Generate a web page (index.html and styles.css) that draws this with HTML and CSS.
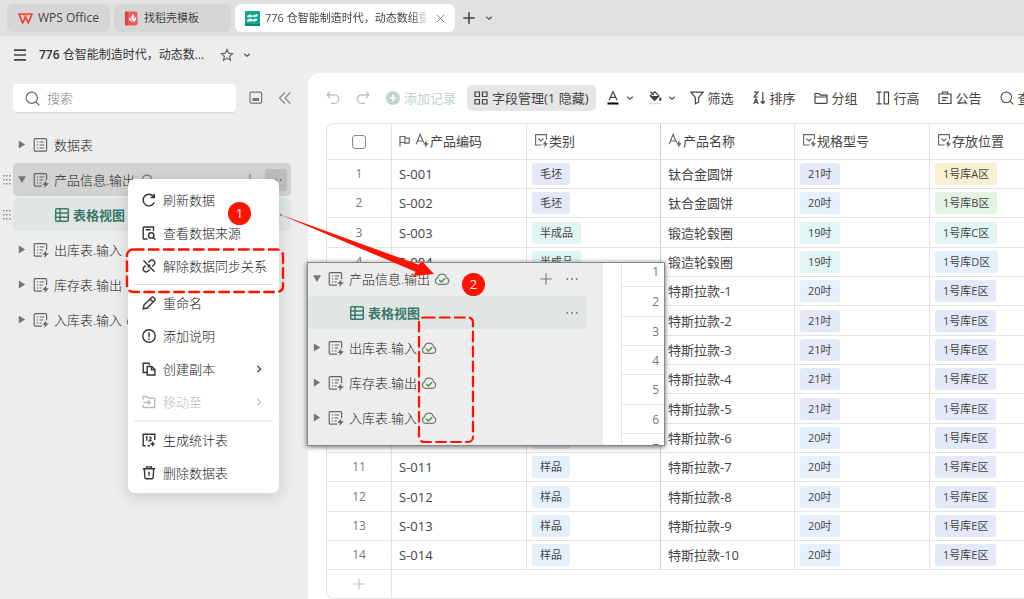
FILE: index.html
```html
<!DOCTYPE html>
<html lang="zh-CN">
<head>
<meta charset="utf-8">
<meta name="viewport" content="width=device-width, initial-scale=1">
<title>776 仓智能制造时代</title>
<link rel="stylesheet" href="styles.css">
</head>
<body>
<svg class="sprite" aria-hidden="true">
  <symbol id="sheet" viewBox="0 0 16 16"><rect x="1.2" y="1.7" width="12.4" height="12.4" rx="1"/><path d="M3.8 5h1.4M3.8 8h1.4M3.8 11h1.4M6.6 5h4.6M6.6 8h4.6M6.6 11h4.6"/></symbol>
  <symbol id="sheet-sync" viewBox="0 0 16 16"><path d="M9 14.1H2.2a1 1 0 0 1-1-1V2.700a1 1 0 0 1 1-1h10.400a1 1 0 0 1 1 1V8M3.800 5h1.400M3.800 8h1.400M3.800 11h1.400M6.600 5h4.600M6.600 8h3.600M6.600 11h2"/><path class="solid" d="M13.400 8.200 9.400 13h2.500l-.6 3 4.500-4.800h-2.700z"/></symbol>
  <symbol id="grid-view" viewBox="0 0 16 16"><rect x="1.7" y="1.7" width="12.6" height="12.6" rx="1"/><path d="M6 1.7v12.6M1.7 6h12.6M1.7 10.2h12.6"/></symbol>
  <symbol id="dots" viewBox="0 0 16 16"><circle class="solid" cx="2.6" cy="8" r="1.1"/><circle class="solid" cx="8" cy="8" r="1.1"/><circle class="solid" cx="13.4" cy="8" r="1.1"/></symbol>
  <symbol id="plus" viewBox="0 0 16 16"><path d="M8 1.5v13M1.5 8h13"/></symbol>
  <symbol id="chev-down" viewBox="0 0 8 8"><path d="m1.2 2.7 2.8 2.6 2.8-2.6"/></symbol>
  <symbol id="chev-right" viewBox="0 0 8 8"><path d="M2.4.8 5.6 4 2.4 7.2"/></symbol>
  <symbol id="grip" viewBox="0 0 8 12"><path class="solid" d="M0 1h1.5v1.5H0zM3 1h1.5v1.5H3zM6 1h1.5v1.5H6zM0 5h1.5v1.5H0zM3 5h1.5v1.5H3zM6 5h1.5v1.5H6zM0 9h1.5v1.5H0zM3 9h1.5v1.5H3zM6 9h1.5v1.5H6z"/></symbol>
  <symbol id="cloud" viewBox="0 0 16 16"><path d="M4.6 13.300a3.300 3.300 0 0 1-1-6.400 4.500 4.500 0 0 1 8.900 0 3.300 3.300 0 0 1-1 6.400z"/><path class="tick" d="m5.2 8.900 2.200 2.100 3.600-3.600"/></symbol>
  <symbol id="search" viewBox="0 0 16 16"><circle cx="7.200" cy="7.200" r="6"/><path d="m11.600 11.600 3.600 3.600"/></symbol>
  <symbol id="text-sync" viewBox="0 0 16 16"><path d="M1.200 12 5.500 1.500 9.300 10.500M2.600 8.500h5.600"/><path class="solid" d="M12.200 7.600 8.800 12.200h2.300l-.5 3.600 4-5h-2.300z"/></symbol>
  <symbol id="select-sync" viewBox="0 0 16 16"><path d="M8 12.800H1.700V1.700h11.600V7M4.700 5.900l2.700 2.500 2.700-2.500"/><path class="solid" d="M12.600 7.800 9.200 12.300h2.300l-.5 3.500 4-4.900h-2.300z"/></symbol>
</svg>

<header class="tabs">
  <a class="tab tab-home" href="#"><svg class="logo" viewBox="0 0 16 14"><path d="M1 2.200h14l-4 9.600-3-6.200-3 6.200z" fill="none" stroke="#f0372d" stroke-width="1.7" stroke-linejoin="round"/><path d="M5.800 2.200 8 6.200l2.400-4" fill="none" stroke="#ff6b3d" stroke-width="1.4"/></svg>WPS Office</a>
  <a class="tab tab-docer" href="#"><svg class="logo" viewBox="0 0 14 16"><rect width="13.500" height="15" y=".5" rx="2.500" fill="#f05a5a"/><rect width="3" height="15" y=".5" rx="1" fill="#d84444"/><path d="M8.600 3c2 2.200 2 4.600-.6 7.200C6 7.800 6.400 5.200 8.600 3z" fill="#fff"/><path d="M4 6.800c1.600.6 2.800 1.800 3.600 4.200-2.200-.2-3.500-1.800-3.600-4.200zM12.200 6.200c.2 3-1 5-4 6 .2-2.800 1.500-4.800 4-6z" fill="#fff"/></svg>找稻壳模板</a>
  <a class="tab tab-current" href="#"><svg class="logo" viewBox="0 0 15 15"><rect width="15" height="15" rx="1" fill="#0ea592"/><path d="M0 13h15v1a1 1 0 0 1-1 1H1a1 1 0 0 1-1-1z" fill="#0a8576"/><path d="m3.300 5.300 1.900-.7M9.300 5l2.200-.7M3.200 9.600l2.200-.8M9 9.400l2-.7M5.200 4.600l1.300.6M5.400 8.800l1.200.5" stroke="#fff" stroke-width="2.300" stroke-linecap="round"/></svg><span class="tab-title">776 仓智能制造时代，动态数组重</span><svg class="icon close" viewBox="0 0 10 10"><path d="m1 1 8 8M9 1 1 9"/></svg></a>
  <button class="bare new-tab" aria-label="新建"><svg class="icon"><use href="#plus"/></svg></button>
  <button class="bare" aria-label="更多标签"><svg class="icon chev"><use href="#chev-down"/></svg></button>
</header>

<div class="titlebar">
  <button class="bare burger" aria-label="菜单"><svg class="icon" viewBox="0 0 12 12"><path d="M0 1.200h12M0 6h12M0 10.800h12"/></svg></button>
  <h1 class="title"><b>776</b> 仓智能制造时代，动态数...</h1>
  <button class="bare star" aria-label="收藏"><svg class="icon" viewBox="0 0 14 14"><path d="m7 1.500 1.600 3.700 4 .4-3 2.700.9 3.900L7 10.100l-3.500 2.100.9-3.900-3-2.700 4-.4z"/></svg></button>
  <button class="bare" aria-label="展开"><svg class="icon chev"><use href="#chev-down"/></svg></button>
</div>

<div class="workspace">
  <aside class="sidebar">
    <div class="search-row">
      <label class="search"><svg class="icon"><use href="#search"/></svg><input type="search" placeholder="搜索" aria-label="搜索"></label>
      <button class="bare dock" aria-label="停靠"><svg class="icon" viewBox="0 0 14 14"><rect x="1" y="1.200" width="11.600" height="11" rx="1.200"/><path class="solid" d="M3.500 7h6.600v3H3.500z"/></svg></button>
      <button class="bare fold" aria-label="收起"><svg class="icon" viewBox="0 0 14 14"><path d="M6.800 1.500 1.500 7l5.300 5.500M12.300 1.500 7 7l5.300 5.500"/></svg></button>
    </div>
    <ul class="tree">
      <li class="node"><span class="grip"></span><a class="row" href="#"><i class="arrow"></i><svg class="icon"><use href="#sheet"/></svg>数据表</a></li>
      <li class="node"><span class="grip"><svg><use href="#grip"/></svg></span><a class="row row-active" href="#"><i class="arrow open"></i><svg class="icon"><use href="#sheet-sync"/></svg>产品信息.输出<svg class="icon cloud"><use href="#cloud"/></svg><span class="actions"><svg class="icon"><use href="#plus"/></svg><span class="more"><svg class="icon"><use href="#dots"/></svg></span></span></a></li>
      <li class="node"><span class="grip"><svg><use href="#grip"/></svg></span><a class="row row-view" href="#"><svg class="icon"><use href="#grid-view"/></svg>表格视图<span class="actions"><svg class="icon"><use href="#dots"/></svg></span></a></li>
      <li class="node"><span class="grip"></span><a class="row" href="#"><i class="arrow"></i><svg class="icon"><use href="#sheet-sync"/></svg>出库表.输入</a></li>
      <li class="node"><span class="grip"></span><a class="row" href="#"><i class="arrow"></i><svg class="icon"><use href="#sheet-sync"/></svg>库存表.输出</a></li>
      <li class="node"><span class="grip"></span><a class="row" href="#"><i class="arrow"></i><svg class="icon"><use href="#sheet-sync"/></svg>入库表.输入<svg class="icon cloud"><use href="#cloud"/></svg></a></li>
    </ul>
  </aside>

  <main class="main">
    <div class="toolbar">
      <button class="tool faded undo" aria-label="撤销"><svg class="icon" viewBox="0 0 14 14"><path d="M4 .8 1 3.800l3 3M1 3.800h7.500a4.300 4.300 0 0 1 0 8.600H5"/></svg></button>
      <button class="tool faded redo" aria-label="重做"><svg class="icon" viewBox="0 0 14 14"><path d="m10 .8 3 3-3 3M13 3.800H5.500a4.300 4.300 0 0 0 0 8.600H9"/></svg></button>
      <button class="tool add"><svg class="icon" viewBox="0 0 14 14"><circle cx="7" cy="7" r="7" fill="#c0d5cf"/><path d="M7 3.800v6.400M3.800 7h6.400" stroke="#fff" stroke-width="1.600"/></svg>添加记录</button>
      <button class="tool pill"><svg class="icon" viewBox="0 0 14 14"><path d="M1 1h4.500v4.500H1zM8.500 1H13v4.500H8.500zM1 8.500h4.500V13H1zM8.500 8.500H13V13H8.500z"/></svg>字段管理(1 隐藏)</button>
      <button class="tool color" aria-label="字体颜色"><svg class="icon" viewBox="0 0 14 14"><path d="M3 9.200 7 .6l4 8.600M4.400 6.400h5.200"/><path d="M1.500 12.500h11" stroke="#000" stroke-width="2.200"/></svg><svg class="icon chev"><use href="#chev-down"/></svg></button>
      <button class="tool fill" aria-label="填充颜色"><svg class="icon" viewBox="0 0 14 14"><path d="M2.500.8 6.200 4M6.800.8l4.200 4.100-4.400 4.400L2.200 4.900z"/><path class="solid" d="M1.800 4.900h9.600L6.600 9.700zM12.300 6s1.300 1.800 1.300 2.600a1.300 1.300 0 0 1-2.600 0c0-.8 1.300-2.600 1.300-2.600z"/><path d="M1.200 12.700h11.600" stroke="#ddd"/></svg><svg class="icon chev"><use href="#chev-down"/></svg></button>
      <button class="tool"><svg class="icon" viewBox="0 0 14 14"><path d="M1 1.200h12L8.600 6.600v4.600l-3.200 1.600V6.600z"/></svg>筛选</button>
      <button class="tool"><svg class="icon" viewBox="0 0 14 14"><path d="M2 1.200h4L2 6h4M1.700 13 4 7.800 6.300 13M2.400 11.400h3.200M10.800 1v11.500M8.600 10.200l2.200 2.300 2-2.300"/></svg>排序</button>
      <button class="tool"><svg class="icon" viewBox="0 0 14 14"><path d="M1 11.500v-9h4l1.500 1.700H13v7.300a.8.800 0 0 1-.8.800H1.800a.8.800 0 0 1-.8-.8zM1 6h12"/></svg>分组</button>
      <button class="tool"><svg class="icon" viewBox="0 0 14 14"><path d="M.5 1.200h5M3 1.200v11.600M.5 12.800h5M8.200 1.200h4.300v11.600H8.200z"/></svg>行高</button>
      <button class="tool"><svg class="icon" viewBox="0 0 14 14"><path d="M1 3h12v9.500H1zM4.500 3V1h5v2M4 6.600h6M4 9.300h4"/></svg>公告</button>
      <button class="tool"><svg class="icon"><use href="#search"/></svg>查找</button>
    </div>

    <div class="sheet">
      <table class="grid">
        <colgroup><col class="c-no"><col class="c-wide"><col class="c-mid"><col class="c-mid"><col class="c-wide"><col></colgroup>
        <thead><tr>
          <th><input class="check" type="checkbox" aria-label="全选"></th>
          <th><span class="head"><svg class="icon flag" viewBox="0 0 12 12"><path d="M1 11.500V1.500h5v6H1M6 3.200h4.200v5H4.800"/></svg><svg class="icon"><use href="#text-sync"/></svg>产品编码</span></th>
          <th><span class="head"><svg class="icon"><use href="#select-sync"/></svg>类别</span></th>
          <th><span class="head"><svg class="icon"><use href="#text-sync"/></svg>产品名称</span></th>
          <th><span class="head"><svg class="icon"><use href="#select-sync"/></svg>规格型号</span></th>
          <th><span class="head"><svg class="icon"><use href="#select-sync"/></svg>存放位置</span></th>
        </tr></thead>
        <tbody>
          <tr><td>1</td><td>S-001</td><td><span class="tag indigo">毛坯</span></td><td>钛合金圆饼</td><td><span class="tag indigo">21吋</span></td><td><span class="tag yellow">1号库A区</span></td></tr>
          <tr><td>2</td><td>S-002</td><td><span class="tag indigo">毛坯</span></td><td>钛合金圆饼</td><td><span class="tag blue">20吋</span></td><td><span class="tag green">1号库B区</span></td></tr>
          <tr><td>3</td><td>S-003</td><td><span class="tag teal">半成品</span></td><td>锻造轮毂圈</td><td><span class="tag teal">19吋</span></td><td><span class="tag teal">1号库C区</span></td></tr>
          <tr><td>4</td><td>S-004</td><td><span class="tag teal">半成品</span></td><td>锻造轮毂圈</td><td><span class="tag teal">19吋</span></td><td><span class="tag blue">1号库D区</span></td></tr>
          <tr><td></td><td></td><td></td><td>特斯拉款-1</td><td><span class="tag blue">20吋</span></td><td><span class="tag indigo">1号库E区</span></td></tr>
          <tr><td></td><td></td><td></td><td>特斯拉款-2</td><td><span class="tag indigo">21吋</span></td><td><span class="tag indigo">1号库E区</span></td></tr>
          <tr><td></td><td></td><td></td><td>特斯拉款-3</td><td><span class="tag indigo">21吋</span></td><td><span class="tag indigo">1号库E区</span></td></tr>
          <tr><td></td><td></td><td></td><td>特斯拉款-4</td><td><span class="tag indigo">21吋</span></td><td><span class="tag indigo">1号库E区</span></td></tr>
          <tr><td></td><td></td><td></td><td>特斯拉款-5</td><td><span class="tag indigo">21吋</span></td><td><span class="tag indigo">1号库E区</span></td></tr>
          <tr><td></td><td></td><td><span class="tag tag-empty indigo"></span></td><td>特斯拉款-6</td><td><span class="tag blue">20吋</span></td><td><span class="tag indigo">1号库E区</span></td></tr>
          <tr><td>11</td><td>S-011</td><td><span class="tag blue">样品</span></td><td>特斯拉款-7</td><td><span class="tag blue">20吋</span></td><td><span class="tag indigo">1号库E区</span></td></tr>
          <tr><td>12</td><td>S-012</td><td><span class="tag blue">样品</span></td><td>特斯拉款-8</td><td><span class="tag blue">20吋</span></td><td><span class="tag indigo">1号库E区</span></td></tr>
          <tr><td>13</td><td>S-013</td><td><span class="tag blue">样品</span></td><td>特斯拉款-9</td><td><span class="tag blue">20吋</span></td><td><span class="tag indigo">1号库E区</span></td></tr>
          <tr><td>14</td><td>S-014</td><td><span class="tag blue">样品</span></td><td>特斯拉款-10</td><td><span class="tag blue">20吋</span></td><td><span class="tag indigo">1号库E区</span></td></tr>
        </tbody>
        <tfoot><tr><td><button class="bare add-row" aria-label="添加行"><svg class="icon"><use href="#plus"/></svg></button></td><td colspan="5"></td></tr></tfoot>
      </table>
    </div>
  </main>
</div>

<div class="menu" role="menu">
  <button class="item" role="menuitem"><svg class="icon" viewBox="0 0 14 14"><path d="M12.300 9.300a5.800 5.800 0 1 1-.6-5.600M12.300.8v3.700H8.600"/></svg>刷新数据</button>
  <button class="item" role="menuitem"><svg class="icon" viewBox="0 0 14 14"><path d="M5.500 13H2a.8.800 0 0 1-.8-.8V1.800A.8.800 0 0 1 2 1h9.500v4M3.800 3.800h5"/><circle cx="9.200" cy="9.400" r="2.700"/><path d="m11.200 11.400 2.200 2.200"/></svg>查看数据来源</button>
  <button class="item" role="menuitem"><svg class="icon" viewBox="0 0 14 14"><path d="M6.200 3.400 8 1.800a2.700 2.700 0 0 1 4 .1 2.700 2.700 0 0 1 0 3.900L10.300 7.500M7.700 10.500 6 12.100a2.700 2.700 0 0 1-4-.1 2.700 2.700 0 0 1 0-3.900l1.700-1.600M5.700 8.300l2.600-2.600M1.500 1.500l11 11.300"/></svg>解除数据同步关系</button>
  <hr class="rule">
  <button class="item" role="menuitem"><svg class="icon" viewBox="0 0 14 14"><path d="m1.200 12.800.9-4L9.600 1.500a1.500 1.500 0 0 1 2.200 0l.8.800a1.500 1.500 0 0 1 0 2.200L5.200 12z M8 3.100 10.900 6"/></svg>重命名</button>
  <button class="item" role="menuitem"><svg class="icon" viewBox="0 0 14 14"><circle cx="7" cy="7" r="6.200"/><path d="M7 3.300v4.900M7 9.400v1.500"/></svg>添加说明</button>
  <button class="item" role="menuitem"><svg class="icon" viewBox="0 0 14 14"><path d="M4.800 10.500H1.200V1.200h5.600l1.200 1.500M5.200 4.500h4.500L13 7.800V13H5.200zM9.500 4.600v3.300H13"/></svg>创建副本<svg class="icon chev next"><use href="#chev-right"/></svg></button>
  <button class="item" role="menuitem" disabled><svg class="icon" viewBox="0 0 14 14"><path d="M1.200 4.500V1.500h4l1.500 1.700h6V12.500H1.200V10M1.200 7.500h7M6 5.200l2.300 2.300L6 9.800"/></svg>移动至<svg class="icon chev next"><use href="#chev-right"/></svg></button>
  <hr class="rule rule-soft">
  <button class="item" role="menuitem"><svg class="icon" viewBox="0 0 14 14"><path d="M8 12.800H5.500M3.500 12.800H1.200V1.200h11.600V7M10.600 8.800v4.400M8.400 11h4.400"/><path stroke-width="1.200" d="m3.800 4.600 1-.8v4M7.200 4.400c2-.9 2.600.6 1.500 1.700L7.200 7.600h2.500"/></svg>生成统计表</button>
  <button class="item" role="menuitem"><svg class="icon" viewBox="0 0 14 14"><path d="M.8 2.800h12.400M4.500 2.600V.9h5v1.700M2.300 3l.6 8.700a1.200 1.200 0 0 0 1.200 1.100h5.800a1.200 1.200 0 0 0 1.200-1.100l.6-8.700M7 5.800v4"/></svg>删除数据表</button>
</div>

<section class="inset">
  <ul class="tree inset-tree">
    <li class="node"><a class="row" href="#"><i class="arrow open"></i><svg class="icon"><use href="#sheet-sync"/></svg>产品信息.输出<svg class="icon cloud"><use href="#cloud"/></svg><span class="actions"><svg class="icon"><use href="#plus"/></svg><svg class="icon"><use href="#dots"/></svg></span></a></li>
    <li class="node"><a class="row row-view" href="#"><svg class="icon"><use href="#grid-view"/></svg>表格视图<span class="actions"><svg class="icon"><use href="#dots"/></svg></span></a></li>
    <li class="node"><a class="row" href="#"><i class="arrow"></i><svg class="icon"><use href="#sheet-sync"/></svg>出库表.输入<svg class="icon cloud"><use href="#cloud"/></svg></a></li>
    <li class="node"><a class="row" href="#"><i class="arrow"></i><svg class="icon"><use href="#sheet-sync"/></svg>库存表.输出<svg class="icon cloud"><use href="#cloud"/></svg></a></li>
    <li class="node"><a class="row" href="#"><i class="arrow"></i><svg class="icon"><use href="#sheet-sync"/></svg>入库表.输入<svg class="icon cloud"><use href="#cloud"/></svg></a></li>
  </ul>
  <ol class="numbers"><li>1</li><li>2</li><li>3</li><li>4</li><li>5</li><li>6</li><li>7</li></ol>
</section>

<svg class="marks" viewBox="0 0 500 460" aria-hidden="true">
  <rect x="127" y="249.500" width="156" height="42.500" rx="6" stroke-width="2.400" stroke-dasharray="11.500 3.500"/>
  <rect x="419" y="317.500" width="54" height="124.500" rx="5" stroke-width="2.200" stroke-dasharray="11.500 3.500"/>
  <path class="pointer" d="M279.500 214.300 418.800 264.700l3-3.700L434 274l-20.500 2 2-4.300z"/>
</svg>
<span class="badge badge-one">1</span>
<span class="badge badge-two">2</span>
</body>
</html>
```
FILE: styles.css
```css
* { box-sizing: border-box; }

body {
  margin: 0;
  min-height: 100vh;
  position: relative;
  display: flex;
  flex-direction: column;
  overflow: hidden;
  background: #ededed;
  color: #222;
  font: 300 13px/18px "Open Sans", "Noto Sans CJK SC", sans-serif;
}

a { color: inherit; text-decoration: none; }
ul, ol { list-style: none; margin: 0; padding: 0; }
button { font: inherit; color: inherit; border: 0; background: none; padding: 0; margin: 0; white-space: nowrap; }

.sprite { position: absolute; width: 0; height: 0; }
.icon { width: 14px; height: 14px; flex: none; display: block; fill: none; stroke: currentColor; stroke-width: 1.2; }
.solid { fill: currentColor; stroke: none; }
.tick { stroke: #4f9a2d; stroke-width: 1.5; }
.chev { width: 8px; height: 8px; stroke-width: 1.2; color: #555; }
.bare { display: flex; align-items: center; justify-content: center; }

/* window tabs */
.tabs { display: flex; align-items: center; gap: 4px; height: 36px; padding: 0 7px; background: #e1e1e1; }
.tab {
  display: flex; align-items: center; flex: none;
  height: 28px; padding: 0 10px;
  border-radius: 6px; background: #d6d6d6; color: #444;
  font-size: 11px; font-weight: 400;
}
.tab .logo { width: 15px; height: 15px; flex: none; margin-right: 5px; }
.tab-home { width: 103px; padding: 0 11px; font-size: 12px; white-space: nowrap; }
.tab-docer { width: 117px; }
.tab-current { width: 220px; background: #fff; }
.tab-title {
  flex: 1; overflow: hidden; white-space: nowrap;
  mask-image: linear-gradient(90deg, #000 90%, transparent);
}
.close { width: 9px; height: 9px; margin-left: 8px; color: #777; stroke-width: 1; }
.new-tab { margin: 0 5px 0 3px; color: #444; }
.new-tab .icon { stroke-width: 1.8; }

.titlebar { display: flex; align-items: center; height: 37px; padding: 0 14px; }
.burger { color: #444; }
.burger .icon { width: 12px; height: 12px; stroke-width: 1.7; }
.title { margin: 0 16px 0 13px; color: #333; font-size: 12px; font-weight: 400; white-space: nowrap; }
.title b { font-weight: 600; }
.star { margin-right: 9px; color: #666; }

.workspace { display: flex; flex: 1; }

/* sidebar */
.sidebar { width: 308px; flex: none; padding-top: 11px; }
.search-row { display: flex; align-items: center; padding: 0 16px 0 13px; }
.search {
  display: flex; align-items: center; gap: 7px; flex: 1;
  height: 28px; padding: 0 12px;
  border-radius: 4px; background: #fff; box-shadow: 0 1px 1px #d8d8d8;
}
.search .icon { width: 15px; height: 15px; color: #666; }
.search input { width: 100%; border: 0; padding: 0; background: none; outline: 0; font: inherit; }
.search input::placeholder { color: #888; }
.dock { margin: 0 15px 0 13px; color: #777; }
.fold { color: #888; }

.tree { display: flex; flex-direction: column; gap: 2px; padding: 16px 17px 0 0; }
.node { display: flex; }
.grip { width: 13px; display: flex; align-items: center; justify-content: center; color: #888; }
.grip svg { width: 8px; height: 12px; }
.row {
  display: flex; align-items: center; flex: 1;
  height: 33px; padding: 0 4px 0 5px; border-radius: 5px;
  white-space: nowrap;
}
.row > .icon:not(.cloud) { width: 16px; height: 16px; margin: 0 5px 0 7px; color: #666; }
.row .solid { color: #333; }
.arrow { width: 8px; height: 8px; background: #777; clip-path: polygon(10% 0, 90% 50%, 10% 100%); }
.arrow.open { clip-path: polygon(0 10%, 100% 10%, 50% 95%); }
.cloud { width: 16px; height: 16px; margin-left: 4px; color: #777; }
.actions { display: flex; align-items: center; gap: 12px; margin-left: auto; padding-right: 4px; color: #777; }
.actions .solid { color: #777; }
.row-active { background: #d2d2d2; }
.row-active .actions { gap: 8px; padding: 0; }
.more { display: flex; align-items: center; justify-content: center; width: 22px; height: 22px; border-radius: 3px; background: #bdbdbd; }
.row-view { background: #dfe6e4; color: #39796a; font-weight: 600; padding-left: 34px; }
.row.row-view > .icon { color: #39796a; stroke-width: 1.5; margin-right: 3px; }

/* main panel */
.main { flex: 1; min-width: 0; padding: 12px 0 0 18px; overflow: hidden; border-radius: 12px 0 0 0; background: #fff; color: #444; }
.toolbar { display: flex; align-items: center; gap: 18px; height: 26px; font-weight: 400; }
.tool { display: flex; align-items: center; gap: 4px; flex: none; height: 26px; }
.faded { color: #bbb; }
.redo { margin: 0 -2px; }
.add { color: #bfd4ce; }
.add .icon { stroke: none; }
.pill { padding: 0 7px; margin: 0 -8px 0 -7px; border-radius: 5px; background: #e6e6e6; }
.color { gap: 6px; }
.fill { gap: 6px; margin: 0 -4px; }

.sheet { margin-top: 12px; border: 1px solid #e3e3e3; border-right: 0; border-radius: 8px 0 0 8px; overflow: hidden; }
.grid { width: 100%; table-layout: fixed; border-spacing: 0; font-weight: 400; }
.c-no { width: 65px; }
.c-wide { width: 135px; }
.c-mid { width: 134px; }
.grid th, .grid td {
  height: 29px; padding: 0 0 0 7px;
  border: solid #e3e3e3; border-width: 0 1px 1px 0;
  text-align: left; font-weight: inherit; white-space: nowrap; overflow: hidden;
}
.grid th { height: 36px; padding-bottom: 2px; }
.grid tbody tr:nth-child(3n) td { height: 30px; }
.grid tr > :first-child { padding: 0; text-align: center; color: #777; font-size: 12px; }
.grid tr > :last-child { border-right: 0; }
.grid tr > :nth-child(3) { border-right-color: #c9c9cf; }
.grid td:nth-child(3), .grid td:nth-child(5), .grid td:nth-child(6) { padding-left: 5px; }
.grid tfoot td { height: 28px; border-bottom: 0; }
.head { display: flex; align-items: center; }
.head .icon { width: 15px; height: 15px; color: #666; }
.head .flag { width: 12px; height: 12px; margin-right: 4px; }
.check { appearance: none; display: block; width: 14px; height: 14px; margin: 0 auto; border: 1px solid #888; border-radius: 3px; background: #fff; }
.tag { display: block; width: fit-content; height: 22px; padding: 0 8px; border-radius: 3px; font-size: 11px; line-height: 22px; }
.tag-empty { width: 38px; }
.indigo { background: #e3e9f7; }
.blue { background: #e4f1fc; }
.teal { background: #e0f5f4; }
.green { background: #e3f3e2; }
.yellow { background: #f9f0d1; }
.add-row { margin: 0 auto; color: #bbb; }

/* context menu */
.menu {
  position: absolute; left: 128px; top: 179px; width: 151px;
  padding: 4px 0; border-radius: 7px; background: #fff;
  box-shadow: 0 4px 16px rgba(0, 0, 0, .14);
}
.item { display: flex; align-items: center; gap: 7px; width: 100%; height: 33px; padding: 0 16px 0 14px; }
.item .icon { stroke-width: 1.4; color: #333; }
.item:disabled, .item:disabled .icon { color: #bbb; }
.item .next { margin-left: auto; stroke-width: 1.2; }
.rule { height: 1px; margin: 2px 6px 1px; border: 0; background: #ddd; }
.rule-soft { height: 2px; background: #efefef; }

/* picture laid over the sheet */
.inset {
  position: absolute; left: 307px; top: 262px; width: 358px; height: 184px;
  display: flex; overflow: hidden;
  border: 1px solid #888; background: #fff; box-shadow: 0 1px 5px rgba(0, 0, 0, .6);
}
.inset-tree { width: 295px; padding: 0 16px 0 0; background: #ededed; }
.inset-tree .node:first-child .row { height: 31px; }
.numbers { flex: 1; margin-left: 18px; border-left: 1px solid #e3e3e3; text-align: right; font-size: 12px; font-weight: 400; color: #777; }
.numbers li { height: 29px; line-height: 29px; padding-right: 5px; border-bottom: 1px solid #e3e3e3; }
.numbers li:nth-child(3n + 2) { height: 30px; }
.numbers li:first-child { height: 24px; line-height: 18px; }

/* annotations */
.marks { position: absolute; left: 0; top: 0; width: 500px; height: 460px; fill: none; stroke: #ff1200; pointer-events: none; }
.pointer { fill: #ff1200; stroke: none; }
.badge {
  position: absolute; width: 23px; height: 23px; border-radius: 50%;
  background: #ff1200; color: #fff; text-align: center; font-size: 13px; line-height: 23px; font-weight: 400;
}
.badge-one { left: 228px; top: 202px; }
.badge-two { left: 462px; top: 273px; }
```
